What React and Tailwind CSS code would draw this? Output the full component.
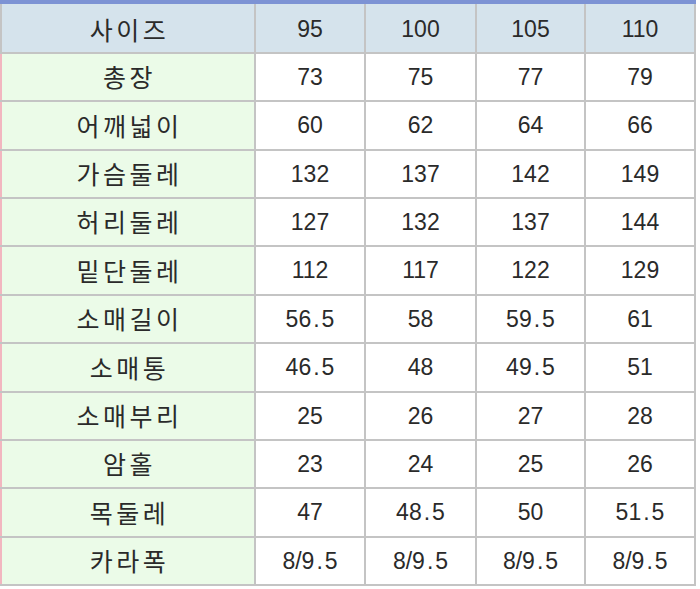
import React from "react";

const header = ["사이즈", "95", "100", "105", "110"];
const rows = [
  ["총장", "73", "75", "77", "79"],
  ["어깨넓이", "60", "62", "64", "66"],
  ["가슴둘레", "132", "137", "142", "149"],
  ["허리둘레", "127", "132", "137", "144"],
  ["밑단둘레", "112", "117", "122", "129"],
  ["소매길이", "56.5", "58", "59.5", "61"],
  ["소매통", "46.5", "48", "49.5", "51"],
  ["소매부리", "25", "26", "27", "28"],
  ["암홀", "23", "24", "25", "26"],
  ["목둘레", "47", "48.5", "50", "51.5"],
  ["카라폭", "8/9.5", "8/9.5", "8/9.5", "8/9.5"],
];

const heights = [46, 47, 46, 46, 47, 46, 47, 46, 46, 47, 46];

const ko = { fontFamily: '"Noto Sans CJK KR", "Noto Sans", sans-serif' };
const num = { fontFamily: '"Liberation Sans", Arial, sans-serif' };

function Num({ v }) {
  const parts = v.split(".");
  if (parts.length === 1) return <>{v}</>;
  return (
    <>
      {parts[0]}
      <span className="px-[2px]">.</span>
      {parts[1]}
    </>
  );
}

const widths = ["w-[252px]", "w-[108px]", "w-[109px]", "w-[107px]", "w-[108px]"];

export default function App() {
  return (
    <div className="w-[700px] h-[589px] bg-white overflow-hidden">
      <div className="h-[4px] w-[696px] bg-[#7d93d4]" />
      <div className="w-[696px] bg-[#c4c4c4] pb-[2px] pr-[2px] flex flex-col gap-[2px]">
        <div className="flex gap-[2px] h-[48px] pl-[2px]">
          {header.map((h, i) => (
            <div
              key={i}
              className={"bg-[#d5e3ec] flex items-center justify-center text-[#2a2a2a] " + widths[i]}
            >
              {i === 0 ? (
                <span style={ko} className="text-[25px] tracking-[3.5px] pl-[3px] pt-[3px]">{h}</span>
              ) : (
                <span style={num} className="text-[23px] pt-[3px]">{h}</span>
              )}
            </div>
          ))}
        </div>
        {rows.map((r, ri) => (
          <div key={ri} className="flex gap-[2px] border-l-2 border-[#f2b6c0]" style={{ height: heights[ri] }}>
            {r.map((c, i) => (
              <div
                key={i}
                className={
                  "flex items-center justify-center text-[#2a2a2a] " +
                  widths[i] +
                  (i === 0 ? " bg-[#ebfbe8]" : " bg-white")
                }
              >
                {i === 0 ? (
                  <span style={ko} className="text-[25px] tracking-[3.5px] pl-[3px]">{c}</span>
                ) : (
                  <span style={num} className="text-[23px]">
                    <Num v={c} />
                  </span>
                )}
              </div>
            ))}
          </div>
        ))}
      </div>
    </div>
  );
}
